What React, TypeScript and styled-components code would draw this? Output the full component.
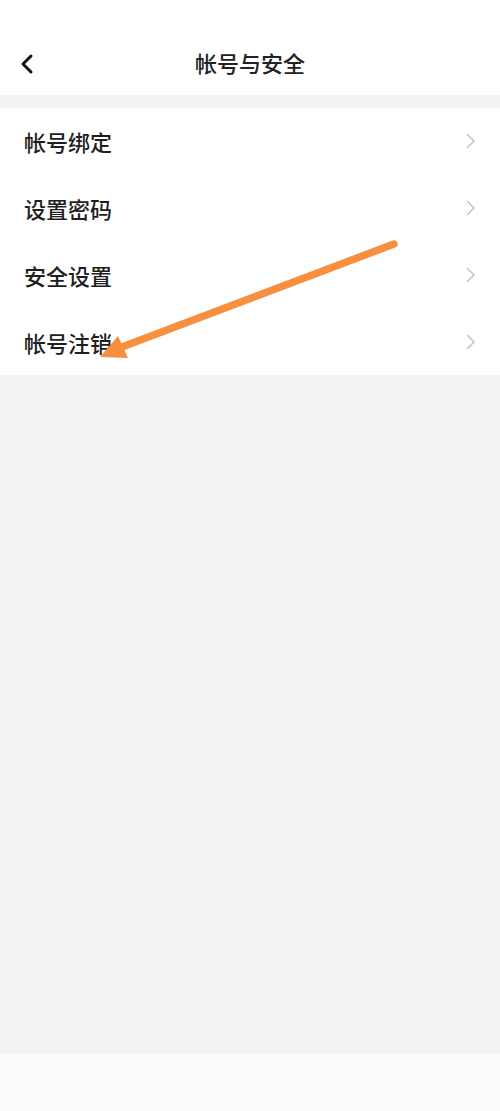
import React from "react";
import styled, { createGlobalStyle } from "styled-components";

const GlobalStyle = createGlobalStyle`
  html, body {
    margin: 0;
    padding: 0;
    background: #f2f3f5;
  }
  body {
    font-family: "Noto Sans CJK SC", "Noto Sans", sans-serif;
  }
`;

const Page = styled.div`
  position: relative;
  width: 500px;
  height: 1111px;
  display: flex;
  flex-direction: column;
  background: #f2f3f5;
  overflow: hidden;
`;

const Header = styled.div`
  height: 95px;
  box-sizing: border-box;
  padding-top: 31px;
  background: #ffffff;
`;

const NavBar = styled.div`
  position: relative;
  height: 62px;
  display: flex;
  align-items: center;
  justify-content: center;
`;

const BackButton = styled.button`
  position: absolute;
  left: 14px;
  top: 20px;
  width: 26px;
  height: 26px;
  padding: 0;
  border: none;
  background: none;
  display: flex;
  align-items: center;
  justify-content: center;
`;

const Title = styled.h1`
  margin: 0;
  font-size: 22px;
  font-weight: 500;
  color: #222;
`;

const List = styled.ul`
  list-style: none;
  margin: 13px 0 0;
  padding: 0;
  background: #ffffff;
`;

const Row = styled.li`
  height: 66.75px;
  display: flex;
  align-items: center;
  justify-content: space-between;
  padding: 0 24px;
  box-sizing: border-box;
`;

const Label = styled.span`
  font-size: 22px;
  font-weight: 500;
  color: #1f1f1f;
`;

const Spacer = styled.div`
  flex: 1;
`;

const Footer = styled.div`
  height: 57px;
  background: #fbfbfb;
`;

const Annotation = styled.svg`
  position: absolute;
  left: 0;
  top: 0;
  pointer-events: none;
`;

const Chevron = () => (
  <svg width="12" height="18" viewBox="0 0 12 18">
    <path d="M3 2 L10 9 L3 16" fill="none" stroke="#c4c4c4" strokeWidth="1.6" />
  </svg>
);

const items = ["帐号绑定", "设置密码", "安全设置", "帐号注销"];

const App = () => (
  <Page>
    <GlobalStyle />
    <Header>
      <NavBar>
        <BackButton aria-label="back">
          <svg width="16" height="22" viewBox="0 0 16 22">
            <path d="M12 3 L4 11 L12 19" fill="none" stroke="#111" strokeWidth="3" strokeLinecap="round" strokeLinejoin="round" />
          </svg>
        </BackButton>
        <Title>帐号与安全</Title>
      </NavBar>
    </Header>
    <List>
      {items.map((t) => (
        <Row key={t}>
          <Label>{t}</Label>
          <Chevron />
        </Row>
      ))}
    </List>
    <Spacer />
    <Footer />
    <Annotation width="500" height="1111" viewBox="0 0 500 1111">
      <line x1="394" y1="244" x2="114" y2="350" stroke="#f78f3f" strokeWidth="7.5" strokeLinecap="round" />
      <polygon points="100,357 118,336 128,358" fill="#f78f3f" />
    </Annotation>
  </Page>
);

export default App;
